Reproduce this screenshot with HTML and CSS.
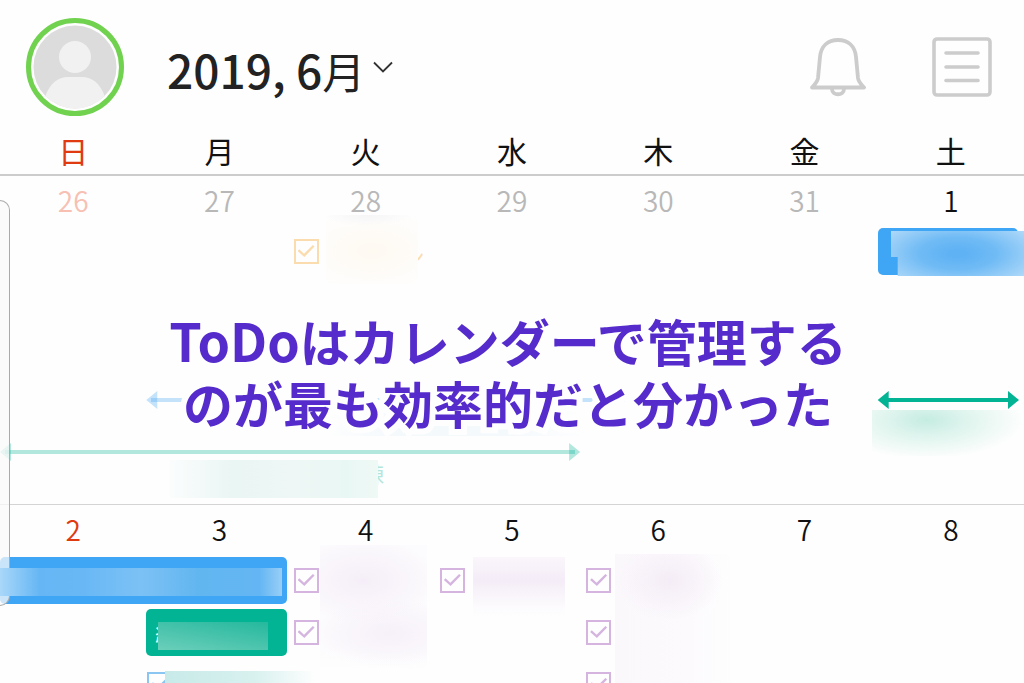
FILE: index.html
```
<!DOCTYPE html>
<html lang="ja">
  <head>
    <meta charset="utf-8">
    <title>2019, 6月</title>
    <link rel="stylesheet" href="styles.css">
  </head>
  <body>
    <header class="topbar">
      <button class="avatar" aria-label="プロフィール">
        <svg viewBox="0 0 84 84" width="84" height="84">
          <clipPath id="face"><circle cx="42" cy="42" r="41.500"/></clipPath>
          <g clip-path="url(#face)">
            <rect width="84" height="84" fill="#dcdcdc"/>
            <circle cx="42" cy="32" r="16" fill="#f1f1f1"/>
            <path d="M12 72C17 58 25 52 35 52H49C59 52 67 58 72 72V84H12Z" fill="#f1f1f1"/>
          </g>
        </svg>
      </button>
      <button class="month"><span>2019, 6<span class="kanji">月</span></span>
        <svg viewBox="0 0 20 12" width="20" height="12"><path d="M1 1.500L10 10.500L19 1.500" fill="none" stroke="#333" stroke-width="1.800"/></svg>
      </button>
      <div class="tools">
        <button aria-label="通知">
          <svg viewBox="0 0 56 60" width="56" height="60" fill="none" stroke="#ccc" stroke-width="3.800" stroke-linecap="round" stroke-linejoin="round">
            <path d="M2 50.500C5 47 7.500 45 8 41L10 20C11 9 18 3 28 3S45 9 46 20L48 41C48.500 45 51 47 54 50.500Z"/>
            <path d="M22 52C22 59 34 59 34 52"/>
          </svg>
        </button>
        <button aria-label="リスト">
          <svg viewBox="0 0 60 60" width="60" height="60" fill="none" stroke="#ccc" stroke-width="3.600" stroke-linecap="round">
            <rect x="2" y="2" width="56" height="56" rx="3"/>
            <path d="M14 16H46M14 30H46M14 43.500H46"/>
          </svg>
        </button>
      </div>
    </header>

    <main class="calendar">
      <table>
        <thead>
          <tr><th class="sun">日</th><th>月</th><th>火</th><th>水</th><th>木</th><th>金</th><th>土</th></tr>
        </thead>
        <tbody class="week">
          <tr class="dates">
            <td class="sun other">26</td><td class="other">27</td><td class="other">28</td><td class="other">29</td><td class="other">30</td><td class="other">31</td><td>1</td>
          </tr>
          <tr>
            <td></td><td></td>
            <td><label class="todo orange"><input type="checkbox" checked aria-label="ToDo"><span class="tail">ン</span><i class="mask mask-28"></i></label></td>
            <td></td><td></td><td></td>
            <td><div class="bar blue"><i class="mask mask-1"></i></div></td>
          </tr>
          <tr><td colspan="7"></td></tr>
          <tr><td colspan="7"></td></tr>
          <tr>
            <td></td>
            <td colspan="4"><div class="range sky"></div><i class="mask mask-sky"></i></td>
            <td></td>
            <td><div class="range green"></div><i class="mask mask-green"></i></td>
          </tr>
          <tr>
            <td colspan="4"><div class="range mint"></div><div class="range-name"><i class="mask-mint"></i><span>練</span></div></td>
            <td colspan="3"></td>
          </tr>
          <tr class="rest"><td colspan="7"></td></tr>
        </tbody>
        <tbody class="week">
          <tr class="dates">
            <td class="sun">2</td><td>3</td><td>4</td><td>5</td><td>6</td><td>7</td><td>8</td>
          </tr>
          <tr>
            <td colspan="2"><div class="bar blue"><i class="mask mask-2"></i></div></td>
            <td><label class="todo purple"><input type="checkbox" checked aria-label="ToDo"><i class="mask mask-4"></i></label></td>
            <td><label class="todo purple"><input type="checkbox" checked aria-label="ToDo"><i class="mask mask-5"></i></label></td>
            <td><label class="todo purple"><input type="checkbox" checked aria-label="ToDo"><i class="mask mask-6"></i></label></td>
            <td></td><td></td>
          </tr>
          <tr>
            <td></td>
            <td><div class="bar teal"><span>紹</span><i class="mask mask-3"></i></div></td>
            <td><label class="todo purple"><input type="checkbox" checked aria-label="ToDo"></label></td>
            <td></td>
            <td><label class="todo purple"><input type="checkbox" checked aria-label="ToDo"></label></td>
            <td></td><td></td>
          </tr>
          <tr>
            <td></td>
            <td><label class="todo lightblue"><input type="checkbox" checked aria-label="ToDo"><i class="mask mask-3b"></i></label></td>
            <td></td><td></td>
            <td><label class="todo purple"><input type="checkbox" checked aria-label="ToDo"></label></td>
            <td></td><td></td>
          </tr>
        </tbody>
      </table>
      <div class="drawer"></div>
      <h1 class="headline"><span class="latin">ToDo</span>はカレンダーで管理する<br>のが最も効率的だと分かった</h1>
    </main>
  </body>
</html>
```

FILE: styles.css
```
* {
  box-sizing: border-box;
}
html, body {
  height: 100%;
  margin: 0;
  overflow: hidden;
}
body {
  display: flex;
  flex-direction: column;
  background: #fefefe;
  color: #111;
  font-family: "Noto Sans CJK JP", sans-serif;
}
button {
  padding: 0;
  border: 0;
  background: none;
  color: inherit;
  font: inherit;
  cursor: pointer;
}
svg {
  display: block;
}

/* top bar */
.topbar {
  display: flex;
  flex: none;
  align-items: center;
  height: 128px;
  padding: 6px 32px 0 26px;
}
.avatar {
  display: flex;
  align-items: center;
  justify-content: center;
  width: 98px;
  height: 98px;
  border: 5px solid #70d24e;
  border-radius: 50%;
}
.month {
  display: flex;
  align-items: center;
  gap: 8px;
  margin-left: 43px;
  color: #222;
  font-size: 46px;
  font-weight: 500;
  line-height: 68px;
}
.month > span {
  padding-top: 4px;
}
.month .kanji {
  font-size: 43px;
  font-weight: 400;
}
.tools {
  display: flex;
  gap: 66px;
  margin-left: auto;
}

/* month grid */
.calendar {
  position: relative;
  flex: 1;
  min-height: 0;
  overflow: hidden;
}
table {
  width: 100%;
  table-layout: fixed;
  border-spacing: 0;
}
th, td {
  position: relative;
  padding: 0;
  vertical-align: top;
}
th {
  height: 48px;
  border-bottom: 2px solid #ccc;
  font-size: 30px;
  font-weight: 400;
  line-height: 44px;
}
.week td {
  height: 52px;
}
.week .dates td {
  height: 52px;
  font-size: 28px;
  font-weight: 350;
  line-height: 49px;
  text-align: center;
}
.week .rest td {
  height: 17px;
  border-bottom: 1px solid #d4d4d4;
}
.week .sun, .sun {
  color: #e03a10;
}
.week .other {
  color: #b8b8b8;
}
.week .sun.other {
  color: #f7c0b2;
}

.bar {
  display: flex;
  position: relative;
  height: 47px;
  margin-right: 6px;
  border-radius: 5px;
  color: #fff;
  font-size: 22px;
  line-height: 47px;
}
.bar.blue {
  background: #3fa6f5;
}
.bar.teal {
  padding-left: 9px;
  background: #02b494;
}

.todo {
  display: flex;
  position: relative;
  padding: 11px 0 0 1px;
}
.todo input {
  appearance: none;
  width: 25px;
  height: 25px;
  margin: 0;
  border: 2px solid;
}
.todo input::before {
  content: "";
  display: block;
  width: 17px;
  height: 12px;
  margin: 4px 2px;
  background: currentColor;
  clip-path: polygon(0 50%, 10% 36%, 38% 72%, 90% 0, 100% 12%, 40% 100%);
}
.orange, .orange input { color: #fbdcae; }
.purple, .purple input { color: #d5b5e0; }
.lightblue, .lightblue input { color: #8bc5f2; }
.tail {
  margin-left: 84px;
  font-size: 22px;
  line-height: 32px;
}

/* multi-day arrows */
.range {
  position: relative;
  height: 18px;
  margin: 7px 5px 0 0;
}
.range::before, .range::after {
  content: "";
  position: absolute;
  inset: 0;
}
.range::before {
  background: currentColor;
  clip-path: polygon(0 50%, 11px 0, 11px 100%, 0 50%, 100% 50%, calc(100% - 11px) 0, calc(100% - 11px) 100%, 100% 50%);
}
.range::after {
  inset: 7px 5px;
  background: currentColor;
}
.range.green { color: #02b494; }
.range.sky { color: rgba(63, 166, 245, .3); }
.range.mint { color: rgba(2, 180, 148, .3); }
.range-name {
  display: flex;
  height: 27px;
  color: #b5e5da;
  font-size: 21px;
  line-height: 24px;
}
.range-name span {
  margin-left: -15px;
}

/* smudges over private entries */
.mask {
  position: absolute;
  z-index: 2;
}
.mask-28 {
  top: -13px;
  left: 33px;
  width: 92px;
  height: 69px;
  background:
    radial-gradient(ellipse 50% 16% at 45% 0, #f5f5f7, transparent),
    radial-gradient(ellipse 85% 60% at 50% 52%, #fef9f1, #fefefe);
}
.mask-1 {
  top: 3px;
  left: 13px;
  right: -6px;
  height: 45px;
  background: radial-gradient(ellipse 65% 80%, #5fb2f4 10%, #70bbf5 45%, #b0d9f9);
  clip-path: polygon(0 0, 100% 0, 100% 100%, 7px 100%, 7px 26px, 0 26px);
}
.mask-sky {
  top: 26px;
  left: 30%;
  right: 25%;
  height: 26px;
  background: linear-gradient(90deg, #fefefe, #f4f9fc 30%, #f4f9fc 70%, #fefefe);
}
.mask-green {
  top: 26px;
  left: -6px;
  right: 0;
  height: 46px;
  background: radial-gradient(ellipse 64% 85% at 36% 22%, #c5ece1, #e1f5ef 45%, #fefefe);
}
.mask-mint {
  position: relative;
  z-index: 2;
  flex: none;
  width: 208px;
  height: 38px;
  margin: -1px 0 0 170px;
  background: linear-gradient(90deg, #fbfdfd, #eaf6f4 30%, #eef7f5 60%, #e9f7f4 85%, #eff9f6);
}
.mask-2 {
  top: 11px;
  left: 0;
  right: 5px;
  height: 28px;
  background: linear-gradient(90deg, #a9d7f9, #66b6f5 14%, #69b8f5 30%, #7cc1f5 50%, #62b6f0 70%, #63b6f3 92%, #98cef7);
}
.mask-3 {
  top: 13px;
  left: 12px;
  width: 110px;
  height: 28px;
  background: linear-gradient(10deg, #6bcfbb, #4cc4ad 45%, #24b99e);
}
.mask-3b {
  top: 10px;
  left: 19px;
  width: 150px;
  height: 40px;
  background: linear-gradient(90deg, #c7eae8, #d8f1ef 60%, #fefefe);
}
.mask-4 {
  top: -12px;
  left: 27px;
  width: 107px;
  height: 126px;
  background:
    radial-gradient(ellipse 70% 34% at 40% 28%, #f5eef8, transparent),
    radial-gradient(ellipse 70% 28% at 65% 70%, #f6f0f9, transparent),
    linear-gradient(#fcfbfd 80%, #fefefe);
}
.mask-5 {
  top: 0;
  left: 34px;
  width: 92px;
  height: 60px;
  background: linear-gradient(#faf6fb, #f4ecf7 40%, #fcfafd 80%, #fefefe);
}
.mask-6 {
  top: -3px;
  left: 30px;
  width: 120px;
  height: 132px;
  background:
    radial-gradient(ellipse 45% 30% at 45% 20%, #f4ecf6, transparent),
    linear-gradient(90deg, #fbf8fc, #fcfafd 60%, #fefefe);
}

.drawer {
  position: absolute;
  top: 72px;
  left: 0;
  z-index: 1;
  width: 10px;
  height: 406px;
  border: 1px solid #aaa;
  border-left: 0;
  border-radius: 0 10px 10px 0;
  background: rgba(250, 250, 250, .75);
}

.headline {
  position: absolute;
  top: 181px;
  left: 0;
  right: 8px;
  z-index: 3;
  margin: 0;
  color: #552bcb;
  font-size: 50px;
  font-weight: 700;
  line-height: 62px;
  text-align: center;
  -webkit-text-stroke: 12px #fefefe;
  paint-order: stroke fill;
}
.headline .latin {
  font-size: 52px;
}
```
